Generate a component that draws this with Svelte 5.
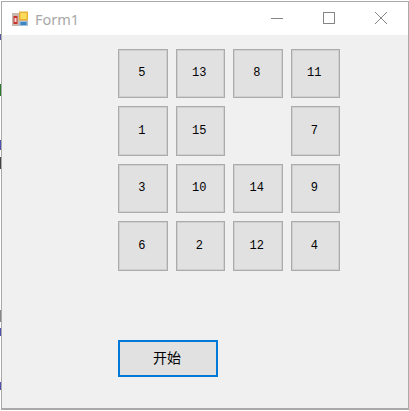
<script>
  const tiles = ['5','13','8','11','1','15','','7','3','10','14','9','6','2','12','4'];
  const crumbs = [
    { y: 34, h: 6, c: '#5a5a9a' }, { y: 84, h: 12, c: '#2a7a2a' }, { y: 140, h: 10, c: '#5050b0' },
    { y: 157, h: 12, c: '#444' }, { y: 310, h: 12, c: '#888' }, { y: 328, h: 8, c: '#5050b0' }, { y: 382, h: 8, c: '#5050b0' }
  ];
</script>

<div class="desk">
  {#each crumbs as k}
    <i class="crumb" style="top:{k.y}px;height:{k.h}px;background:{k.c}"></i>
  {/each}
  <div class="window">
    <header class="bar">
      <svg class="logo" width="16" height="16" viewBox="0 0 16 16">
        <rect x="0" y="2" width="16" height="13" fill="#c9b8b0"/>
        <rect x="1.5" y="5" width="4" height="8" fill="#c8322c"/>
        <rect x="2.5" y="7" width="2" height="4" fill="#f4d9d0"/>
        <rect x="7" y="0.5" width="9" height="9" fill="#e8b23a"/>
        <rect x="8.5" y="2" width="6" height="6" fill="#fbdc5a"/>
        <rect x="7" y="10" width="9" height="5" fill="#a9c0d4"/>
        <rect x="8.5" y="11" width="6" height="3" fill="#3d86c6"/>
      </svg>
      <span class="title">Form1</span>
      <div class="controls">
        <svg width="14" height="14" viewBox="0 0 14 14"><path d="M1 7.5H13" stroke="#858585"/></svg>
        <svg width="14" height="14" viewBox="0 0 14 14"><rect x="1.5" y="1.5" width="11" height="11" fill="none" stroke="#858585"/></svg>
        <svg width="14" height="14" viewBox="0 0 14 14"><path d="M1 1L13 13M13 1L1 13" stroke="#858585"/></svg>
      </div>
    </header>
    <main class="body">
      <div class="grid">
        {#each tiles as t}
          {#if t}
            <button class="tile">{t}</button>
          {:else}
            <span></span>
          {/if}
        {/each}
      </div>
      <button class="start">开始</button>
    </main>
  </div>
</div>

<style>
  :global(body) { margin: 0; background: #fff; }
  .desk { position: relative; width: 409px; height: 411px; padding: 1px 0 1px 1px; box-sizing: border-box; overflow: hidden; }
  .crumb { position: absolute; left: 0; width: 1px; }
  .window { height: 100%; box-sizing: border-box; border: 1px solid #a9a9a9; border-bottom-width: 2px; background: #f0f0f0; display: flex; flex-direction: column; }
  .bar { height: 33px; flex: none; background: #fff; display: flex; align-items: center; padding-left: 10px; }
  .logo { margin-right: 7px; }
  .title { font: 14.5px "Noto Sans", "Liberation Sans", sans-serif; color: #a8a8a8; }
  .controls { margin-left: auto; display: flex; gap: 38px; padding-right: 20px; margin-top: -2px; }
  .controls svg { display: block; }
  .body { flex: 1; padding: 13.5px 0 0 116px; }
  .grid { display: grid; grid-template-columns: repeat(4, 49.5px); grid-auto-rows: 49.5px; gap: 8px; }
  button { margin: 0; padding: 0; background: #e1e1e1; color: #000; box-sizing: border-box; }
  .tile { border: 1px solid #ababab; box-shadow: inset 0 0 0 1px #d0d0d0; font: 12px "Liberation Mono", "Noto Sans CJK SC", monospace; padding: 0 2px 0 0; }
  .start { display: block; margin-top: 69px; width: 100px; height: 37px; border: 2px solid #0078d7; font: 14px "Noto Sans CJK SC", sans-serif; padding: 0 2px 3px 0; }
</style>
